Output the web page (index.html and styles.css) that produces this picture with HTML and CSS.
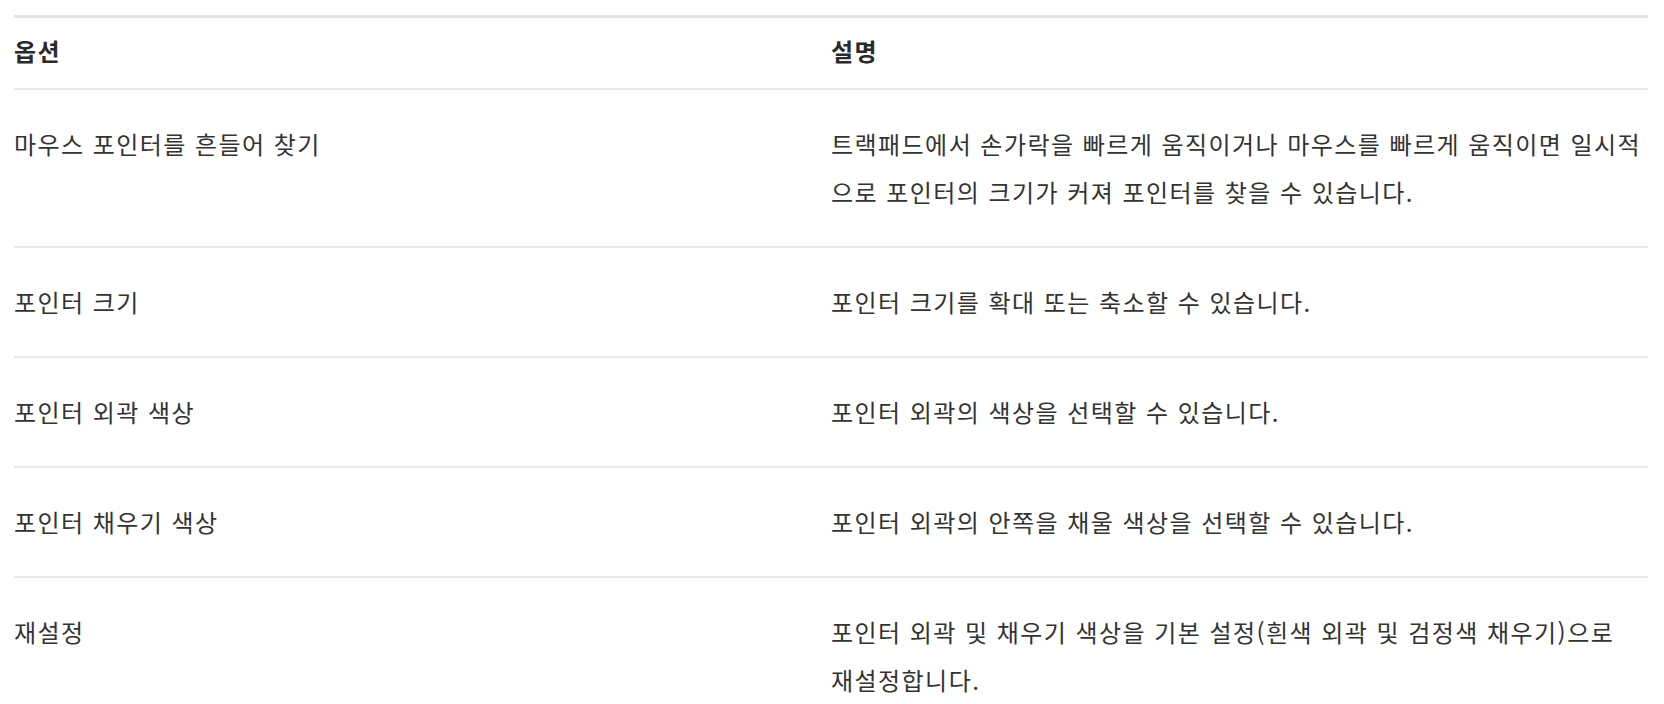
FILE: index.html
```html
<!DOCTYPE html>
<html lang="ko">
<head>
<meta charset="utf-8">
<title>포인터 옵션</title>
<link rel="stylesheet" href="styles.css">
</head>
<body>
<table class="options">
  <thead>
    <tr class="head-row">
      <th class="col-opt">옵션</th>
      <th class="col-desc">설명</th>
    </tr>
  </thead>
  <tbody>
    <tr>
      <td>마우스 포인터를 흔들어 찾기</td>
      <td>트랙패드에서 손가락을 빠르게 움직이거나 마우스를 빠르게 움직이면 일시적으로 포인터의 크기가 커져 포인터를 찾을 수 있습니다.</td>
    </tr>
    <tr>
      <td>포인터 크기</td>
      <td>포인터 크기를 확대 또는 축소할 수 있습니다.</td>
    </tr>
    <tr>
      <td>포인터 외곽 색상</td>
      <td>포인터 외곽의 색상을 선택할 수 있습니다.</td>
    </tr>
    <tr>
      <td>포인터 채우기 색상</td>
      <td>포인터 외곽의 안쪽을 채울 색상을 선택할 수 있습니다.</td>
    </tr>
    <tr>
      <td>재설정</td>
      <td>포인터 외곽 및 채우기 색상을 기본 설정(흰색 외곽 및 검정색 채우기)으로 <span class="nowrap">재설정합니다.</span></td>
    </tr>
  </tbody>
</table>
</body>
</html>
```
FILE: styles.css
```css
html, body {
  margin: 0;
  background: #ffffff;
}

body {
  padding: 15px 16px 0 14px;
  font-family: "Noto Sans CJK KR", "Noto Sans", sans-serif;
  font-size: 24px;
  letter-spacing: 1.45px;
  color: #333333;
}

.options {
  width: 100%;
  table-layout: fixed;
  border-collapse: collapse;
}

.col-opt,
.col-desc {
  width: 50%;
}

.head-row {
  border-top: 3px solid #e5e5e5;
  border-bottom: 2px solid #e8e8e8;
}

.options th {
  text-align: left;
  font-weight: 700;
  color: #2a2a2a;
  line-height: 48px;
  padding: 9px 0 13px 0;
}

.options td {
  vertical-align: top;
  line-height: 48px;
  padding: 30px 0 30px 0;
}

.options tbody tr {
  border-bottom: 2px solid #e8e8e8;
}

.nowrap {
  white-space: nowrap;
}
```
